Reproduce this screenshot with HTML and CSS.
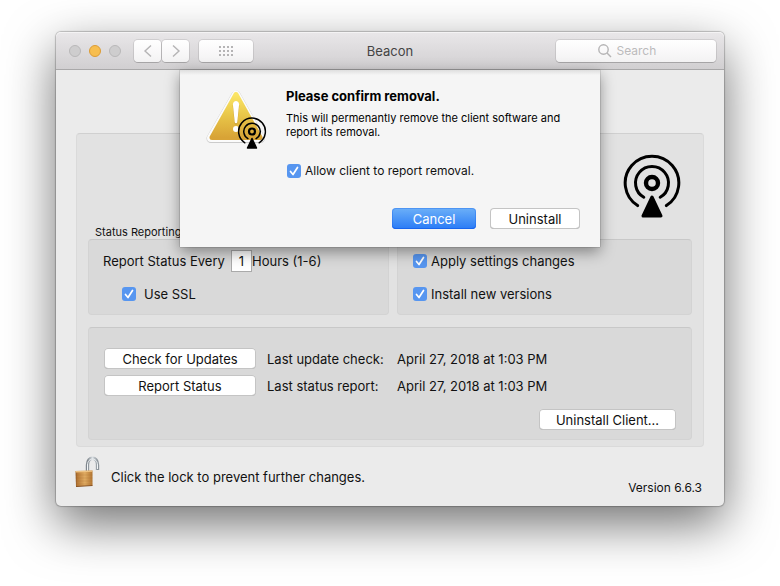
FILE: index.html
```html
<!DOCTYPE html>
<html lang="en">
<head>
<meta charset="utf-8">
<title>Beacon</title>
<link rel="stylesheet" href="styles.css">
</head>
<body>
<svg class="defs" aria-hidden="true">
  <symbol id="beacon" viewBox="0 0 58 64">
    <g fill="none" stroke="currentColor" stroke-linecap="round">
      <circle cx="29" cy="29" r="6" stroke-width="4.4"/>
      <path d="M20.8 43.3A16.5 16.5 0 1 1 37.2 43.3" stroke-width="3"/>
      <path d="M14.6 51.6A26.8 26.8 0 1 1 43.4 51.6" stroke-width="3"/>
    </g>
    <path d="M29 43L38 62H20Z" fill="currentColor" stroke="currentColor" stroke-width="3" stroke-linejoin="round"/>
  </symbol>
</svg>
<main class="window">
  <header class="titlebar">
    <div class="tools">
      <div class="lights">
        <button class="light" aria-label="Close"></button>
        <button class="light light-amber" aria-label="Minimize"></button>
        <button class="light" aria-label="Zoom"></button>
      </div>
      <div class="nav">
        <button class="tool" aria-label="Back"><svg width="10" height="14" viewBox="0 0 10 14"><path d="M8 1.5L2 7l6 5.500"/></svg></button>
        <button class="tool" aria-label="Forward"><svg width="10" height="14" viewBox="0 0 10 14"><path d="M2 1.500L8 7l-6 5.500"/></svg></button>
      </div>
      <button class="tool tool-wide" aria-label="Show all">
        <svg width="14" height="10" viewBox="0 0 14 10"><path class="dots" d="M0 1h14M0 5h14M0 9h14"/></svg>
      </button>
    </div>
    <h1 class="title">Beacon</h1>
    <label class="search">
      <svg width="14" height="14" viewBox="0 0 14 14"><circle cx="5.500" cy="5.500" r="4.700"/><path d="M9 9l4 4"/></svg>
      <input type="text" placeholder="Search" aria-label="Search">
    </label>
  </header>

  <div class="content">
    <section class="panel">
      <div class="panel-head">
        <h2 class="group-title">Status Reporting</h2>
        <svg class="logo"><use href="#beacon"/></svg>
      </div>
      <div class="groups">
        <div class="group">
          <div class="row">
            <label for="hours">Report Status Every</label>
            <input class="hours" id="hours" type="text" value="1">
            <span>Hours (1-6)</span>
          </div>
          <label class="check check-indent"><input type="checkbox" checked>Use SSL</label>
        </div>
        <div class="group">
          <label class="check"><input type="checkbox" checked>Apply settings changes</label>
          <label class="check"><input type="checkbox" checked>Install new versions</label>
        </div>
      </div>
      <div class="group actions">
        <div class="status">
          <button class="button">Check for Updates</button>
          <span>Last update check:</span>
          <span>April 27, 2018 at 1:03 PM</span>
          <button class="button">Report Status</button>
          <span>Last status report:</span>
          <span>April 27, 2018 at 1:03 PM</span>
        </div>
        <button class="button button-client">Uninstall Client...</button>
      </div>
    </section>

    <footer class="footer">
      <button class="lock">
        <svg width="26" height="32" viewBox="0 0 26 32" aria-hidden="true">
          <defs>
            <linearGradient id="brass" x1="0" x2="1" y1="0" y2="0">
              <stop offset="0" stop-color="#8f5723"/><stop offset=".12" stop-color="#b87a38"/>
              <stop offset=".55" stop-color="#e0ab62"/><stop offset="1" stop-color="#b27532"/>
            </linearGradient>
            <linearGradient id="steel" x1="0" x2="1" y1="0" y2="0">
              <stop offset="0" stop-color="#7d858c"/><stop offset=".5" stop-color="#d9dee2"/><stop offset="1" stop-color="#8b9399"/>
            </linearGradient>
          </defs>
          <path d="M12.500 16V9C12.500 0 22.500 0 22.500 9v5" fill="none" stroke="url(#steel)" stroke-width="3.400"/>
          <path d="M12.500 15V9C12.500 1 22.500 1 22.500 9v4" fill="none" stroke="#f2f5f7" stroke-width="1"/>
          <path d="M.5 15L17.500 14.500v15L1 30.500Z" fill="url(#brass)"/>
          <path d="M.5 15L17.500 14.500v1.300L.5 16.500Z" fill="#eec384"/>
          <path d="M.5 19h17M.5 22h17M.5 25h17M1 28h16.500" stroke="#9a6127" stroke-width=".6" opacity=".3"/>
          <path d="M1 30.500L17.500 29.500" stroke="#87501f" stroke-width="1"/>
        </svg>
        <span>Click the lock to prevent further changes.</span>
      </button>
      <span class="version">Version 6.6.3</span>
    </footer>
  </div>

  <section class="sheet" role="dialog" aria-labelledby="sheet-title">
    <svg class="alert" width="64" height="64" viewBox="0 0 64 64" aria-hidden="true">
      <defs>
        <linearGradient id="gold" x1="0" x2="0" y1="0" y2="1">
          <stop offset="0" stop-color="#fbe565"/><stop offset=".5" stop-color="#e8c548"/><stop offset="1" stop-color="#d8a336"/>
        </linearGradient>
      </defs>
      <path d="M32 9L56.500 52.500H7Z" fill="#999" stroke="#999" stroke-width="9" stroke-linejoin="round" opacity=".45"/>
      <path d="M32 8.500L56.500 52H7Z" fill="#fbfbfb" stroke="#fbfbfb" stroke-width="8" stroke-linejoin="round"/>
      <path d="M32 8.500L56 51.500H8Z" fill="url(#gold)" stroke="url(#gold)" stroke-width="5" stroke-linejoin="round"/>
      <path d="M28.700 19c0-5 6.600-5 6.600 0L33.400 36c-.2 2-2.600 2-2.800 0Z" fill="#b98b22" opacity=".6" transform="translate(0 1)"/>
      <path d="M28.900 18.500c0-4.700 6.200-4.700 6.200 0L33.300 36c-.2 1.800-2.400 1.800-2.600 0Z" fill="#fff"/>
      <circle cx="32" cy="43" r="3" fill="#fff"/>
      <use href="#beacon" x="33.500" y="31" width="29" height="32"/>
    </svg>
    <div class="sheet-body">
      <h2 class="sheet-title" id="sheet-title">Please confirm removal.</h2>
      <p class="sheet-text">This will permenantly remove the client software and report its removal.</p>
      <label class="check sheet-check"><input type="checkbox" checked>Allow client to report removal.</label>
      <div class="sheet-buttons">
        <button class="button button-default">Cancel</button>
        <button class="button">Uninstall</button>
      </div>
    </div>
  </section>
</main>
</body>
</html>
```
FILE: styles.css
```css
* {
  box-sizing: border-box;
}

body {
  min-height: 100vh;
  margin: 0;
  padding: 32px 56px;
  background: #fff;
  color: #111;
  font: 13px/20px Inter, "Liberation Sans", sans-serif;
}

h1, h2, p {
  margin: 0;
  font: inherit;
}

button, input {
  font: inherit;
  color: inherit;
}

button {
  padding: 0;
  border: 0;
  background: none;
}

.defs {
  position: absolute;
  width: 0;
  height: 0;
}

.window {
  position: relative;
  border-radius: 5px;
  background: #ebebeb;
  box-shadow: 0 0 1px 1px rgba(0, 0, 0, .22), 0 18px 50px rgba(0, 0, 0, .56);
}

.titlebar {
  display: grid;
  grid-template-columns: 1fr auto 1fr;
  align-items: center;
  height: 38px;
  padding: 0 8px;
  border-bottom: 1px solid #a9a8a9;
  border-radius: 5px 5px 0 0;
  background: linear-gradient(#e9e7e9, #d1cfd1);
  box-shadow: inset 0 1px #f4f3f4;
}

.tools, .lights, .nav {
  display: flex;
  align-items: center;
}

.tools {
  padding-left: 5px;
}

.lights {
  gap: 8px;
  margin-right: 13px;
}

.light {
  width: 12px;
  height: 12px;
  border: 1px solid #b9b8b9;
  border-radius: 50%;
  background: #cecdce;
}

.light-amber {
  border-color: #dc9c35;
  background: #f7be4f;
}

.nav {
  gap: 1px;
  margin-right: 10px;
}

.tool, .search {
  display: flex;
  align-items: center;
  justify-content: center;
  height: 22px;
  border-radius: 4px;
  background: linear-gradient(#fff, #f3f2f3);
  box-shadow: 0 0 0 1px rgba(0, 0, 0, .09), 0 1px rgba(0, 0, 0, .14);
}

.tool {
  width: 27px;
}

.tool-wide {
  width: 54px;
}

.tool svg, .search svg {
  fill: none;
  stroke: #b5b4b5;
  stroke-width: 1.4;
}

.tool .dots {
  stroke-width: 2;
  stroke-dasharray: 2 2;
}

.title {
  color: #444;
}

.search {
  justify-self: end;
  width: 160px;
  gap: 5px;
}

.search svg {
  flex: none;
}

.search input {
  width: 58px;
  padding: 0;
  border: 0;
  outline: 0;
  background: none;
  font-size: 12px;
}

.search input::placeholder {
  color: #bcbbbc;
}

.content {
  padding: 63px 20px 8px;
}

.panel {
  padding: 0 11px 6px;
  border: 1px solid #dadada;
  border-top-color: #d0d0d0;
  border-radius: 4px;
  background: #e2e2e2;
}

.panel-head {
  display: flex;
  justify-content: space-between;
  align-items: flex-end;
  height: 105px;
  padding: 0 11px 0 7px;
}

.group-title {
  font-size: 11px;
  line-height: 14px;
}

.logo {
  width: 58px;
  height: 64px;
  margin-bottom: 21px;
  color: #000;
}

.groups {
  display: grid;
  grid-template-columns: 301fr 295fr;
  gap: 8px;
  margin-bottom: 12px;
}

.group {
  display: flex;
  flex-direction: column;
  gap: 13px;
  padding: 11px 14px 10px;
  border: 1px solid #d3d3d3;
  border-top-color: #c8c8c8;
  border-radius: 4px;
  background: #d9d9d9;
}

.row {
  display: flex;
  align-items: center;
  height: 20px;
}

.row label {
  width: 128px;
}

.hours {
  width: 21px;
  height: 22px;
  padding: 0;
  border: 1px solid #aaa;
  background: #fff;
  text-align: center;
}

.check {
  display: flex;
  align-items: center;
  gap: 4px;
}

.groups .check {
  padding-left: 1px;
}

.groups .check-indent {
  gap: 8px;
  padding-left: 19px;
}

.check input {
  width: 14px;
  height: 14px;
  margin: 0;
  border-radius: 3px;
  background: #5796f0 url("data:image/svg+xml,%3Csvg xmlns='http://www.w3.org/2000/svg' viewBox='0 0 14 14'%3E%3Cpath d='M3.500 7.500l2.500 3L10.500 3.500' fill='none' stroke='white' stroke-width='1.700' stroke-linecap='round' stroke-linejoin='round'/%3E%3C/svg%3E");
  appearance: none;
}

.actions {
  padding: 20px 15px 9px;
}

.status {
  display: grid;
  grid-template-columns: 152px 119px auto;
  column-gap: 11px;
  row-gap: 6px;
  align-items: center;
}

.button {
  height: 21px;
  border-radius: 4px;
  background: #fff;
  box-shadow: inset 0 0 0 1px #c4c4c4, inset 0 -1px #aaa;
}

.button-client {
  align-self: flex-end;
  width: 137px;
}

.button-default {
  background: linear-gradient(#6cb0f8, #2a7bf6);
  box-shadow: inset 0 0 0 1px rgba(24, 100, 235, .35), inset 0 -1px #1a66f0;
  color: #fff;
}

.footer {
  display: flex;
  justify-content: space-between;
  align-items: flex-end;
  padding: 9px 2px 0 0;
}

.lock {
  display: flex;
  align-items: center;
  gap: 10px;
  margin: 0 0 10px -1px;
}

.lock span {
  padding-top: 10px;
}

.version {
  font-size: 12px;
}

.sheet {
  position: absolute;
  top: 38px;
  left: 50%;
  display: flex;
  gap: 18px;
  width: 420px;
  margin-left: -210px;
  padding: 16px 20px 18px 24px;
  background: linear-gradient(#dedede, #f5f5f5 5px);
  box-shadow: 0 0 1px rgba(0, 0, 0, .6), 0 5px 14px rgba(0, 0, 0, .4);
}

.alert {
  flex: none;
  color: #000;
}

.sheet-body {
  flex: 1;
}

.sheet-title {
  color: #000;
  font-weight: 700;
}

.sheet-text {
  margin-top: 5px;
  color: #000;
  font-size: 11px;
  line-height: 14px;
}

.sheet-check {
  margin: 22px 0 27px;
  padding-left: 1px;
  font-size: 12px;
}

.sheet-buttons {
  display: grid;
  grid-template-columns: 84px 90px;
  justify-content: end;
  gap: 14px;
}
```
